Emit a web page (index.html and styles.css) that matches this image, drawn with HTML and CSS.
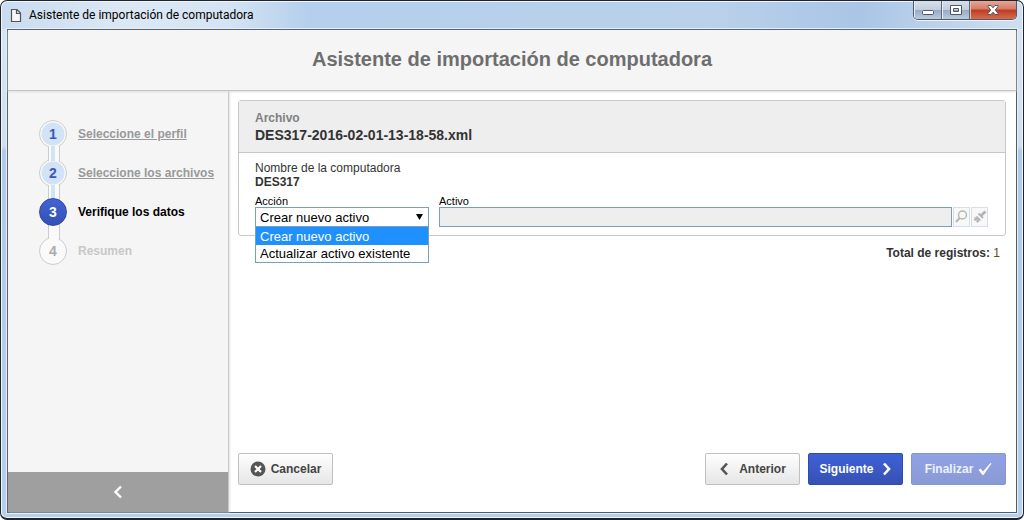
FILE: index.html
```html
<!DOCTYPE html>
<html lang="es">
<head>
<meta charset="utf-8">
<title>Asistente de importación de computadora</title>
<link rel="stylesheet" href="styles.css">
</head>
<body>
<div class="window">
  <div class="titlebar">
    <svg class="page-icon" width="12" height="15" viewBox="0 0 12 15" aria-hidden="true"><path d="M1.5 1.5h5.5l3.500 3.500v8.500h-9zM6.500 1.500v4h4" fill="#f4f6f8" stroke="#555" stroke-width="1.200"/></svg>
    <span class="window-title">Asistente de importación de computadora</span>
    <div class="window-controls">
      <button class="control" type="button" aria-label="Minimizar"><svg width="14" height="14" viewBox="0 0 14 14"><rect x="1.500" y="7.500" width="11" height="4" rx="1" fill="#fff" stroke="#535666"/></svg></button>
      <button class="control" type="button" aria-label="Maximizar"><svg width="14" height="14" viewBox="0 0 14 14"><path d="M1.500 2.500h11v9h-11zM4.500 5.500v3h5v-3z" fill="#fff" fill-rule="evenodd" stroke="#535666"/></svg></button>
      <button class="control control-close" type="button" aria-label="Cerrar"><svg width="14" height="14" viewBox="0 0 14 14"><path d="M2 2.500h3l2 2.300 2-2.300h3v1L9.300 7l2.700 3.500v1H9L7 9.200 5 11.500H2v-1L4.700 7 2 3.500z" fill="#fff" stroke="#535666"/></svg></button>
    </div>
  </div>
  <div class="client">
    <header class="header"><h1>Asistente de importación de computadora</h1></header>
    <div class="body">
      <nav class="sidebar">
        <ol class="steps">
          <li class="step done"><span class="number">1</span><a href="#perfil">Seleccione el perfil</a></li>
          <li class="step done"><span class="number">2</span><a href="#archivos">Seleccione los archivos</a></li>
          <li class="step current" aria-current="step"><span class="number">3</span><span>Verifique los datos</span></li>
          <li class="step pending"><span class="number">4</span><span>Resumen</span></li>
        </ol>
        <button class="collapse" type="button" aria-label="Contraer"><svg width="10" height="14" viewBox="0 0 10 14"><path d="M8 1.500L2.500 7 8 12.500" fill="none" stroke="#fff" stroke-width="2.400"/></svg></button>
      </nav>
      <main class="content">
        <section class="card">
          <div class="card-header">
            <div class="caption">Archivo</div>
            <div class="filename">DES317-2016-02-01-13-18-58.xml</div>
          </div>
          <div class="card-body">
            <div class="computer-label">Nombre de la computadora</div>
            <div class="computer-name">DES317</div>
            <div class="fields">
              <div class="field action">
                <label for="accion">Acción</label>
                <div class="select">
                  <select id="accion"><option>Crear nuevo activo</option><option>Actualizar activo existente</option></select>
                  <svg class="arrow" width="7" height="6" viewBox="0 0 7 6" aria-hidden="true"><path d="M0 0h7L3.500 6z" fill="#000"/></svg>
                  <ul class="options" role="listbox" aria-label="Acción">
                    <li class="selected" role="option" aria-selected="true">Crear nuevo activo</li>
                    <li role="option" aria-selected="false">Actualizar activo existente</li>
                  </ul>
                </div>
              </div>
              <div class="field asset">
                <label for="activo">Activo</label>
                <div class="asset-row">
                  <input id="activo" type="text" disabled>
                  <button class="tool" type="button" aria-label="Buscar" disabled><svg width="15" height="16" viewBox="0 0 15 16"><circle cx="8.500" cy="6" r="4" fill="none" stroke="#b8b8b8" stroke-width="1.500"/><path d="M5.800 8.800L2 13" stroke="#b8b8b8" stroke-width="2.200"/></svg></button>
                  <button class="tool" type="button" aria-label="Limpiar" disabled><svg width="15" height="16" viewBox="0 0 15 16"><path d="M9 6.500L13.500 2.500" stroke="#b4b4b4" stroke-width="3"/><path d="M6.500 4.500L11 9" stroke="#b4b4b4" stroke-width="2"/><path d="M2 7.500l1.300 1L5 6.700l4 4L5.500 14 4 12.500l1-1.500-2 1L1.500 10.500l1.300-1z" fill="#b8b8b8"/></svg></button>
                </div>
              </div>
            </div>
          </div>
        </section>
        <p class="total"><b>Total de registros:</b> <span>1</span></p>
        <footer class="actions">
          <button class="btn cancel" type="button"><svg width="16" height="16" viewBox="0 0 16 16"><circle cx="8" cy="8" r="7.500" fill="#555"/><path d="M5 5l6 6M11 5l-6 6" stroke="#fff" stroke-width="2.200"/></svg>Cancelar</button>
          <button class="btn previous" type="button"><svg width="10" height="14" viewBox="0 0 10 14"><path d="M8 1.500L3 7l5 5.500" fill="none" stroke="#555" stroke-width="2.600"/></svg>Anterior</button>
          <button class="btn primary" type="button">Siguiente<svg width="10" height="14" viewBox="0 0 10 14"><path d="M2 1.500L7 7l-5 5.500" fill="none" stroke="#fff" stroke-width="2.600"/></svg></button>
          <button class="btn primary finish" type="button" disabled>Finalizar<svg width="14" height="14" viewBox="0 0 14 14"><path d="M0.500 8l2-1.500L5 9.500 12.500 1l1 .5L5.500 13H4.500z" fill="#fff"/></svg></button>
        </footer>
      </main>
    </div>
  </div>
</div>
</body>
</html>
```
FILE: styles.css
```css
* { box-sizing: border-box; }

body {
  margin: 0;
  background: #fff;
  color: #333;
  font: 12px/14px "Liberation Sans", Arial, sans-serif;
}

button { font: inherit; padding: 0; }
svg { display: block; flex: none; }

.window {
  display: flex;
  flex-direction: column;
  min-height: 100vh;
  padding: 0 6px 5px;
  border: 1px solid #22242c;
  border-bottom-width: 2px;
  border-radius: 7px;
  background: linear-gradient(#dce7f4, #d0deee 145px, #b0cbe6 150px, #b5d0ea);
  box-shadow: inset 0 0 0 1px #eef6fd;
}

.titlebar {
  display: flex;
  align-items: flex-start;
  height: 27px;
  margin: 1px -5px 0;
  padding-left: 8px;
  border-radius: 6px 6px 0 0;
  background: linear-gradient(90deg, #c9dcef, #dce8f4 12%, #d5e4f3 22%, #b4d0ec 30%, #b9d1ea 70%, #a9c6e6 84%, #cfdfef);
}

.page-icon { margin-top: 6px; }

.window-title {
  flex: 1;
  padding: 5px 0 0 7px;
  color: #000;
  font: 12px/16px Roboto, "Open Sans", sans-serif;
}

.window-controls {
  display: flex;
  height: 19px;
  margin: -1px 5px 0 0;
  overflow: hidden;
  border: 1px solid #4f5a6b;
  border-top: 0;
  border-radius: 0 0 5px 5px;
  box-shadow: 0 1px 0 #edf5fc;
}

.control {
  display: grid;
  place-items: center;
  width: 28px;
  border: 0;
  border-right: 1px solid #5c697b;
  background: linear-gradient(#d7e0eb, #c0cedf 48%, #98a9c0 50%, #b8cce2);
  box-shadow: inset 1px 0 0 #e4edf7;
}

.control-close {
  width: 46px;
  border-right: 0;
  background: linear-gradient(#e3a89a, #d37a66 45%, #bd3c22 50%, #d66d4c);
  box-shadow: inset 1px 0 0 #efb7a9;
}

.client {
  display: flex;
  flex: 1;
  flex-direction: column;
  border: 1px solid #515b66;
  background: #fff;
  box-shadow: 0 0 0 1px #e3f0fa;
}

.header {
  z-index: 1;
  border-bottom: 1px solid #c4c4c4;
  background: #f5f5f5;
  box-shadow: 0 1px 2px #ddd;
  text-align: center;
}

h1 {
  margin: 0;
  padding: 17px 0 19px;
  color: #6e6e6e;
  font-size: 20px;
  line-height: 24px;
}

.body { display: flex; flex: 1; }

.sidebar {
  display: flex;
  flex: none;
  flex-direction: column;
  justify-content: space-between;
  width: 221px;
  border-right: 1px solid #c8c8c8;
  background: #f5f5f5;
  box-shadow: 1px 0 2px #e4e4e4;
}

.steps {
  display: grid;
  gap: 11px;
  margin: 0;
  padding: 29px 8px 0 31px;
  list-style: none;
  font-weight: bold;
}

.step {
  position: relative;
  display: flex;
  align-items: center;
  gap: 11px;
  color: #c8c8c8;
}

.step a { color: #999; }

.number {
  display: grid;
  place-items: center;
  width: 28px;
  height: 28px;
  border: 1px solid #ccc;
  border-radius: 50%;
  background: #fafafa;
  color: #aaa;
  font-size: 14px;
}

.done .number {
  background: radial-gradient(circle, #d1e3f4 11px, #fafafa 12px);
  color: #3a55c4;
}

.current { color: #000; }

.current .number {
  z-index: 1;
  border-color: #2c48a8;
  background: linear-gradient(#4163d4, #3450b4);
  color: #fff;
}

.step:not(:last-child)::after {
  position: absolute;
  top: 26px;
  left: 9px;
  width: 10px;
  height: 15px;
  border: solid #ccc;
  border-width: 0 1px;
  background: #fafafa;
  content: "";
}

.step.done::after {
  z-index: 1;
  background: linear-gradient(90deg, #fafafa 2px, #d1e3f4 2px 6px, #fafafa 6px);
}

.step.current .number { z-index: 2; }
.step.current::after { z-index: 1; }

.collapse {
  display: grid;
  place-items: center;
  height: 40px;
  border: 0;
  background: #9f9f9f;
}

.content {
  display: flex;
  flex: 1;
  flex-direction: column;
  min-width: 0;
  padding: 9px 10px 27px 9px;
}

.card {
  border: 1px solid #c8c8c8;
  border-radius: 3px;
}

.card-header {
  padding: 10px 16px 8px;
  border-bottom: 1px solid #c8c8c8;
  background: #eee;
}

.caption { color: #808080; font-weight: bold; }

.filename {
  padding-top: 1px;
  font-size: 14px;
  font-weight: bold;
  line-height: 18px;
}

.card-body { padding: 8px 17px 8px 16px; }
.computer-name { font-weight: bold; }

.fields { display: flex; gap: 10px; padding-top: 6px; }
.field label { display: block; color: #000; font-size: 11px; line-height: 12px; }
.action { width: 174px; }
.asset { flex: 1; }

.select { position: relative; }

select {
  display: block;
  width: 100%;
  height: 20px;
  padding: 1px 4px 0;
  border: 1px solid #7b9ebd;
  border-radius: 0;
  appearance: none;
  background: #fff;
  color: #000;
  font: 13px/17px "Liberation Sans", Arial, sans-serif;
}

.arrow { position: absolute; top: 7px; right: 6px; }

.options {
  position: absolute;
  z-index: 2;
  top: 19px;
  right: 0;
  left: 0;
  margin: 0;
  padding: 0;
  border: 1px solid #7b9ebd;
  background: #fff;
  color: #000;
  font-size: 13px;
  line-height: 17px;
  list-style: none;
}

.options li { padding: 0 4px; }
.options .selected { padding-top: 1px; background: #1e90ff; color: #fff; }

.asset-row { display: flex; gap: 1px; }

.asset-row input {
  flex: 1;
  min-width: 0;
  height: 20px;
  border: 1px solid #7b9ebd;
  background: #eee;
}

.tool {
  width: 17px;
  height: 20px;
  border: 1px solid #d5deea;
  background: #f8f8f8;
}

.total { margin: 10px 6px; text-align: right; }
.total span { color: #5c4a20; }

.actions {
  display: flex;
  gap: 8px;
  margin-top: auto;
}

.btn {
  display: flex;
  align-items: center;
  justify-content: center;
  width: 95px;
  height: 32px;
  gap: 5px;
  border: 1px solid #c0c0c0;
  border-radius: 2px;
  background: linear-gradient(#fefefe, #e6e6e6);
  color: #444;
  font-weight: bold;
}

.cancel { margin-right: auto; }
.previous { gap: 10px; }

.primary {
  gap: 8px;
  border-color: #2f4bb0;
  background: linear-gradient(#3f61d6, #3651b5);
  color: #fff;
}

.finish {
  gap: 5px;
  border-color: #8496d2;
  background: linear-gradient(#8fa2e5, #8a9ad4);
  color: #eef1ff;
}
```
